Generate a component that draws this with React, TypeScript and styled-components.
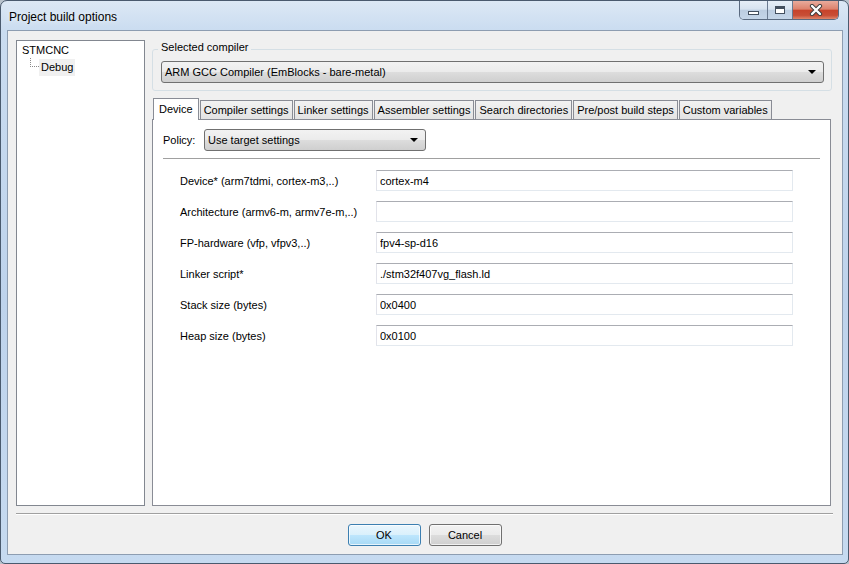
import React from "react";
import styled, { createGlobalStyle } from "styled-components";

const GlobalStyle = createGlobalStyle`
  html, body {
    margin: 0;
    padding: 0;
    background: #b9c3cd;
  }
  body {
    font-family: "Liberation Sans", Arial, sans-serif;
    font-size: 11px;
    color: #000;
  }
  * {
    box-sizing: border-box;
  }
`;

const tabs = [
  "Device",
  "Compiler settings",
  "Linker settings",
  "Assembler settings",
  "Search directories",
  "Pre/post build steps",
  "Custom variables",
];

const fields = [
  { label: "Device* (arm7tdmi, cortex-m3,..)", value: "cortex-m4" },
  { label: "Architecture (armv6-m, armv7e-m,..)", value: "" },
  { label: "FP-hardware (vfp, vfpv3,..)", value: "fpv4-sp-d16" },
  { label: "Linker script*", value: "./stm32f407vg_flash.ld" },
  { label: "Stack size (bytes)", value: "0x0400" },
  { label: "Heap size (bytes)", value: "0x0100" },
];

export default function App() {
  return (
    <>
      <GlobalStyle />
      <Window>
        <TitleBar>
          <Title>Project build options</Title>
          <CaptionButtons>
            <CaptionButton $width={28} $first>
              <MinGlyph />
            </CaptionButton>
            <CaptionButton $width={26}>
              <MaxGlyph />
            </CaptionButton>
            <CaptionButton $width={47} $close>
              <svg width="14" height="12" viewBox="0 0 14 12">
                <path
                  d="M3 2 L11 10 M11 2 L3 10"
                  stroke="#3b3b3b"
                  strokeWidth="4.2"
                  strokeLinecap="round"
                />
                <path
                  d="M3 2 L11 10 M11 2 L3 10"
                  stroke="#ffffff"
                  strokeWidth="2.4"
                  strokeLinecap="round"
                />
              </svg>
            </CaptionButton>
          </CaptionButtons>
        </TitleBar>

        <Client>
          <MainRow>
            <Tree>
              <TreeRow>STMCNC</TreeRow>
              <TreeRow $indent>
                <Connector />
                <TreeLabel $selected>Debug</TreeLabel>
              </TreeRow>
            </Tree>

            <RightColumn>
              <GroupBox>
                <GroupTitle>Selected compiler</GroupTitle>
                <Combo $width="100%">
                  <span>ARM GCC Compiler (EmBlocks - bare-metal)</span>
                  <Arrow />
                </Combo>
              </GroupBox>

              <TabStrip>
                {tabs.map((t, i) => (
                  <Tab key={t} $active={i === 0}>
                    {t}
                  </Tab>
                ))}
              </TabStrip>

              <TabPanel>
                <PolicyRow>
                  <PolicyLabel>Policy:</PolicyLabel>
                  <Combo $width="222px">
                    <span>Use target settings</span>
                    <Arrow />
                  </Combo>
                </PolicyRow>
                <HLine />
                <Form>
                  {fields.map((f) => (
                    <FieldRow key={f.label}>
                      <FieldLabel>{f.label}</FieldLabel>
                      <TextBox readOnly value={f.value} />
                    </FieldRow>
                  ))}
                </Form>
              </TabPanel>
            </RightColumn>
          </MainRow>

          <BottomLine />

          <ButtonRow>
            <PushButton $default>OK</PushButton>
            <PushButton>Cancel</PushButton>
          </ButtonRow>
        </Client>
      </Window>
    </>
  );
}

const Window = styled.div`
  width: 849px;
  height: 564px;
  border: 1px solid #4a5a6e;
  border-radius: 7px 7px 5px 5px;
  background: linear-gradient(
    to bottom,
    #dce8f5 0px,
    #cadcf0 30px,
    #bed3ec 300px,
    #c6daf0 564px
  );
  display: flex;
  flex-direction: column;
  overflow: hidden;
`;

const TitleBar = styled.div`
  height: 29px;
  display: flex;
  align-items: flex-start;
  padding-left: 8px;
  flex-shrink: 0;
`;

const Title = styled.div`
  margin-top: 8px;
  font-size: 12px;
  line-height: 16px;
  color: #000;
  text-shadow: 0 0 6px rgba(255, 255, 255, 0.9);
`;

const CaptionButtons = styled.div`
  margin-left: auto;
  margin-right: 9px;
  display: flex;
  height: 19px;
  border: 1px solid #5a6a80;
  border-top: none;
  border-radius: 0 0 5px 5px;
  overflow: hidden;
`;

const CaptionButton = styled.div<{
  $width: number;
  $close?: boolean;
  $first?: boolean;
}>`
  width: ${(p) => p.$width - 1}px;
  height: 100%;
  display: flex;
  align-items: center;
  justify-content: center;
  border-left: ${(p) => (p.$first ? "none" : "1px solid #6a7a90")};
  background: ${(p) =>
    p.$close
      ? "linear-gradient(to bottom, #e9ab9c 0%, #dd826d 45%, #c7432b 52%, #c84e36 80%, #e0866b 100%)"
      : "linear-gradient(to bottom, #e6eef7 0%, #d7e3f0 45%, #bccde1 52%, #c4d5e8 100%)"};
`;

const MinGlyph = styled.div`
  width: 11px;
  height: 4px;
  margin-top: 5px;
  border: 1px solid #434f5e;
  background: #fff;
`;

const MaxGlyph = styled.div`
  width: 10px;
  height: 8px;
  border: 1px solid #434f5e;
  border-top-width: 3px;
  background: #fff;
`;

const Client = styled.div`
  flex: 1;
  margin: 0 5px 8px 6px;
  border: 1px solid #8d9db1;
  background: #f0f0f0;
  padding: 9px 9px 8px 8px;
  display: flex;
  flex-direction: column;
`;

const MainRow = styled.div`
  height: 466px;
  display: flex;
  gap: 7px;
  padding-right: 2px;
`;

const Tree = styled.div`
  width: 129px;
  height: 100%;
  border: 1px solid #828790;
  background: #fff;
  padding: 1px 5px;
`;

const TreeRow = styled.div<{ $indent?: boolean }>`
  display: flex;
  align-items: flex-start;
  height: 17px;
  line-height: 16px;
  padding-left: ${(p) => (p.$indent ? "8px" : "0")};
`;

const Connector = styled.span`
  width: 9px;
  height: 9px;
  margin-top: -1px;
  border-left: 1px dotted #8a8a8a;
  border-bottom: 1px dotted #8a8a8a;
`;

const TreeLabel = styled.span<{ $selected?: boolean }>`
  height: 17px;
  line-height: 17px;
  padding: 0 2px;
  background: ${(p) => (p.$selected ? "#f0f0f0" : "transparent")};
`;

const RightColumn = styled.div`
  flex: 1;
  display: flex;
  flex-direction: column;
`;

const GroupBox = styled.div`
  position: relative;
  margin-top: 9px;
  margin-right: -1px;
  border: 1px solid #d5dfe5;
  border-radius: 3px;
  padding: 11px 7px 7px 8px;
`;

const GroupTitle = styled.span`
  position: absolute;
  top: -10px;
  left: 5px;
  padding: 0 3px;
  line-height: 14px;
  background: #f0f0f0;
`;

const Combo = styled.div<{ $width: string }>`
  width: ${(p) => p.$width};
  height: 22px;
  display: flex;
  align-items: center;
  justify-content: space-between;
  padding: 0 7px 0 3px;
  border: 1px solid #707070;
  border-radius: 3px;
  background: linear-gradient(
    to bottom,
    #f2f2f2 0%,
    #ebebeb 50%,
    #dddddd 50%,
    #cfcfcf 100%
  );
  white-space: nowrap;
`;

const Arrow = styled.span`
  width: 0;
  height: 0;
  border-left: 4px solid transparent;
  border-right: 4px solid transparent;
  border-top: 4px solid #000;
`;

const TabStrip = styled.div`
  position: relative;
  z-index: 1;
  height: 22px;
  margin-top: 7px;
  margin-bottom: -1px;
  padding-left: 1px;
  display: flex;
  align-items: flex-end;
`;

const Tab = styled.div<{ $active?: boolean }>`
  height: ${(p) => (p.$active ? "22px" : "19px")};
  margin-bottom: ${(p) => (p.$active ? "0" : "1px")};
  padding: ${(p) => (p.$active ? "2px 5px 0" : "1px 3px 0")};
  margin-left: ${(p) => (p.$active ? "0" : "1px")};
  border: 1px solid #898c95;
  border-bottom: none;
  line-height: 16px;
  white-space: nowrap;
  background: ${(p) =>
    p.$active ? "#fff" : "linear-gradient(to bottom, #f2f2f2, #e3e3e3)"};
`;

const TabPanel = styled.div`
  flex: 1;
  border: 1px solid #898c95;
  background: #fff;
  padding: 9px 10px 0 10px;
`;

const PolicyRow = styled.div`
  display: flex;
  align-items: center;
`;

const PolicyLabel = styled.span`
  width: 41px;
`;

const HLine = styled.div`
  height: 1px;
  margin-top: 7px;
  background: #a0a0a0;
`;

const Form = styled.div`
  margin-top: 11px;
  padding-left: 17px;
  display: flex;
  flex-direction: column;
  gap: 10px;
`;

const FieldRow = styled.div`
  display: flex;
  align-items: center;
  height: 21px;
`;

const FieldLabel = styled.span`
  width: 196px;
`;

const TextBox = styled.input`
  width: 417px;
  height: 21px;
  padding: 0 3px;
  border: 1px solid;
  border-color: #abadb3 #e3e9ef #e3e9ef #e2e3ea;
  font-family: "Liberation Sans", Arial, sans-serif;
  font-size: 11px;
  color: #000;
  background: #fff;
  outline: none;
`;

const BottomLine = styled.div`
  margin-top: 7px;
  border-top: 1px solid #a0a0a0;
  border-bottom: 1px solid #fff;
`;

const ButtonRow = styled.div`
  margin-top: 9px;
  display: flex;
  justify-content: center;
  gap: 8px;
`;

const PushButton = styled.div<{ $default?: boolean }>`
  width: 73px;
  height: 22px;
  display: flex;
  align-items: center;
  justify-content: center;
  border: 1px solid ${(p) => (p.$default ? "#3c7fb1" : "#707070")};
  border-radius: 3px;
  box-shadow: inset 0 0 0 1px rgba(255, 255, 255, 0.7);
  background: ${(p) =>
    p.$default
      ? "linear-gradient(to bottom, #eaf6fd 0%, #d9f0fc 50%, #bee6fd 50%, #a7d9f5 100%)"
      : "linear-gradient(to bottom, #f2f2f2 0%, #ebebeb 50%, #dddddd 50%, #cfcfcf 100%)"};
`;
